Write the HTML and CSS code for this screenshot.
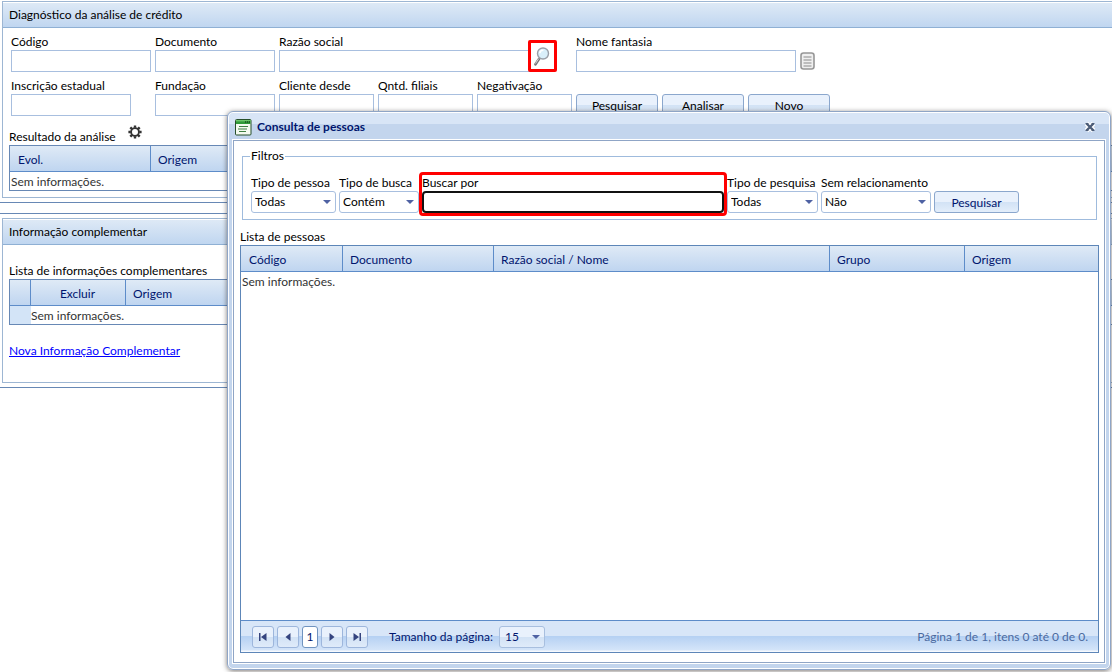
FILE: index.html
```html
<!DOCTYPE html>
<html lang="pt-BR">
<head>
<meta charset="utf-8">
<title>Diagnóstico da análise de crédito</title>
<link rel="stylesheet" href="styles.css">
</head>
<body>
<main class="page">
  <section class="zone">
    <div class="panel">
      <h2 class="panel-title">Diagnóstico da análise de crédito</h2>
      <div class="panel-body">
        <form class="form-grid">
          <div class="field"><label for="codigo">Código</label><input id="codigo" type="text"></div>
          <div class="field"><label for="documento">Documento</label><input id="documento" type="text"></div>
          <div class="field wide">
            <label for="razao">Razão social</label>
            <input id="razao" type="text" class="razao">
            <button type="button" class="lookup" aria-label="Buscar pessoa">
              <svg width="18" height="20" viewBox="0 0 18 20"><path d="M5 13 1.500 18.300" stroke="#77777b" stroke-width="2.600" stroke-linecap="round"/><path d="M4.700 12.600 1.500 17.500" stroke="#d4d4d7" stroke-width="1"/><circle cx="9" cy="7.500" r="5.500" fill="#d9effa" stroke="#9a9fa8" stroke-width="1.400"/><path d="M5.800 7.200a3.400 3.400 0 0 1 3.600-3" stroke="#fff" stroke-width="1.600" fill="none"/></svg>
            </button>
          </div>
          <div class="field wide">
            <label for="fantasia">Nome fantasia</label>
            <div class="with-icon">
              <input id="fantasia" type="text" class="fantasia">
              <button type="button" class="icon-btn" aria-label="Listar">
                <svg width="15" height="18" viewBox="0 0 15 18"><rect x="1" y="1" width="13" height="16" rx="2.5" fill="#efefef" stroke="#979797" stroke-width="1.6"/><path d="M3.5 5h8M3.5 8h8M3.5 11h8M3.5 14h8" stroke="#8c8c8c" stroke-width="1.2"/></svg>
              </button>
            </div>
          </div>
          <div class="field short"><label for="inscricao">Inscrição estadual</label><input id="inscricao" type="text"></div>
          <div class="field"><label for="fundacao">Fundação</label><input id="fundacao" type="text"></div>
          <div class="field"><label for="cliente">Cliente desde</label><input id="cliente" type="text"></div>
          <div class="field"><label for="filiais">Qntd. filiais</label><input id="filiais" type="text"></div>
          <div class="field"><label for="negativacao">Negativação</label><input id="negativacao" type="text"></div>
          <button type="button" class="btn">Pesquisar</button>
          <button type="button" class="btn">Analisar</button>
          <button type="button" class="btn">Novo</button>
        </form>
        <div class="caption result-caption">
          <span>Resultado da análise</span>
          <button type="button" class="icon-btn gear" aria-label="Configurar">
            <svg width="14" height="14" viewBox="0 0 14 14"><circle cx="7" cy="7" r="3.900" fill="none" stroke="#333" stroke-width="1.800"/><path d="M7 .4v2.400M7 11.200v2.400M.4 7h2.400M11.200 7h2.400M2.300 2.300l1.800 1.800M9.900 9.900l1.800 1.800M11.700 2.300 9.900 4.100M4.100 9.900l-1.800 1.800" stroke="#333" stroke-width="2.400"/></svg>
          </button>
        </div>
        <table class="grid bordered">
          <colgroup><col class="w-evol"><col></colgroup>
          <thead><tr><th>Evol.</th><th>Origem</th></tr></thead>
          <tbody><tr><td colspan="2">Sem informações.</td></tr></tbody>
        </table>
      </div>
    </div>
  </section>

  <section class="zone extra">
    <div class="panel">
      <h2 class="panel-title">Informação complementar</h2>
      <div class="panel-body">
        <div class="caption list-caption">Lista de informações complementares</div>
        <table class="grid bordered">
          <colgroup><col class="w-marker"><col class="w-excluir"><col></colgroup>
          <thead><tr><th></th><th class="center">Excluir</th><th>Origem</th></tr></thead>
          <tbody><tr><td class="marker"></td><td colspan="2" class="flush">Sem informações.</td></tr></tbody>
        </table>
        <p class="link-row"><a href="#nova">Nova Informação Complementar</a></p>
      </div>
    </div>
  </section>
</main>

<div class="dialog" role="dialog" aria-labelledby="dialog-title">
  <header class="dialog-head">
    <svg width="17" height="17" viewBox="0 0 17 17"><rect x=".5" y=".5" width="15.500" height="15.500" rx="1" fill="#f4faf0" stroke="#274f2a"/><path d="M1 1h14.500v4H1z" fill="#2f9a38"/><path d="M1 1h14.500v1.400H1z" fill="#6cc66a"/><path d="M10 3h1.200M12 3h1.200M14 3h1" stroke="#164d1c" stroke-width="1.400"/><path d="M4 7.500h9M3 10h9M4 12.500h7" stroke="#3f7f43" stroke-width="1.200"/></svg>
    <h1 id="dialog-title">Consulta de pessoas</h1>
    <button type="button" class="close" aria-label="Fechar">
      <svg width="12" height="12" viewBox="0 0 12 12"><path d="M2.500 2.500l7 7M9.500 2.500l-7 7" stroke="#fff" stroke-width="5"/><path d="M2.500 2.500l7 7M9.500 2.500l-7 7" stroke="#4c5c77" stroke-width="2.400"/><path d="M1.500 2.500h3M7.500 2.500h3M1.500 9.500h3M7.500 9.500h3" stroke="#4c5c77" stroke-width="1"/></svg>
    </button>
  </header>
  <div class="dialog-body">
    <fieldset class="filters">
      <legend>Filtros</legend>
      <div class="filter-row">
        <div class="field f-pessoa"><label for="tp">Tipo de pessoa</label><div class="select"><select id="tp"><option>Todas</option></select></div></div>
        <div class="field f-busca"><label for="tb">Tipo de busca</label><div class="select"><select id="tb"><option>Contém</option></select></div></div>
        <div class="field f-buscar"><label for="bp">Buscar por</label><input id="bp" type="text"></div>
        <div class="field f-pesquisa"><label for="tq">Tipo de pesquisa</label><div class="select"><select id="tq"><option>Todas</option></select></div></div>
        <div class="field f-rel"><label for="sr">Sem relacionamento</label><div class="select"><select id="sr"><option>Não</option></select></div></div>
        <button type="button" class="btn navy">Pesquisar</button>
      </div>
    </fieldset>
    <div class="caption people-caption">Lista de pessoas</div>
    <div class="people">
      <table class="grid">
        <colgroup><col class="w-codigo"><col class="w-documento"><col><col class="w-grupo"><col class="w-origem"></colgroup>
        <thead><tr><th>Código</th><th>Documento</th><th>Razão social / Nome</th><th>Grupo</th><th>Origem</th></tr></thead>
        <tbody><tr><td colspan="5">Sem informações.</td></tr></tbody>
      </table>
      <nav class="pager" aria-label="Paginação">
        <button type="button" aria-label="Primeira página"><svg width="8" height="8" viewBox="0 0 8 8"><path d="M0 0h1.500v8H0zM7.500 0v8L2 4z"/></svg></button>
        <button type="button" aria-label="Página anterior"><svg width="8" height="8" viewBox="0 0 8 8"><path d="M6.500 0v8L1.500 4z"/></svg></button>
        <button type="button" class="current">1</button>
        <button type="button" aria-label="Próxima página"><svg width="8" height="8" viewBox="0 0 8 8"><path d="M1.500 0v8l5-4z"/></svg></button>
        <button type="button" aria-label="Última página"><svg width="8" height="8" viewBox="0 0 8 8"><path d="M.5 0v8L6 4zM6.500 0H8v8H6.500z"/></svg></button>
        <label for="size">Tamanho da página:</label>
        <div class="select size"><select id="size"><option>15</option></select></div>
        <span class="info">Página 1 de 1, itens 0 até 0 de 0.</span>
      </nav>
    </div>
  </div>
</div>
</body>
</html>
```
FILE: styles.css
```css
* { box-sizing: border-box; }

body {
  margin: 0;
  min-height: 100vh;
  overflow: hidden;
  background: #fff;
  color: #000;
  font: 12px/16px Lato, "Open Sans", sans-serif;
}

input, select, button { font: inherit; color: inherit; margin: 0; }

.zone {
  padding: 1px 0 4px 2px;
  border-bottom: 1px solid #6788b5;
}
.extra {
  margin-top: 10px;
  padding-top: 4px;
  border-top: 1px solid #6788b5;
}
.panel { border: 1px solid #9db6d3; border-right: 0; }
.panel-title {
  margin: 0;
  padding: 5px 6px;
  height: 26px;
  font-size: 12px;
  font-weight: 400;
  border-bottom: 1px solid #8fb0d4;
  background: linear-gradient(#dfeaf6, #c0d6f0);
  box-shadow: inset 0 1px #fff;
}
.panel-body { padding: 6px 0 6px 6px; }

.form-grid {
  display: grid;
  grid-template-columns: 140px 120px repeat(3, 95px) repeat(3, 82px);
  gap: 6px 4px;
  padding-left: 2px;
  align-items: end;
}
.field { position: relative; display: flex; flex-direction: column; white-space: nowrap; }
.field input {
  width: 100%;
  height: 22px;
  padding: 0 4px;
  border: 1px solid #a8bfdf;
  background: #fff;
}
.wide { grid-column: span 3; }
.field .razao { width: 272px; }
.lookup {
  position: absolute;
  left: 249px;
  bottom: 0;
  width: 29px;
  height: 32px;
  padding: 3px 0 0 0;
  border: 3px solid #f00;
  border-radius: 2px;
  background: #fff;
}
.with-icon { display: flex; align-items: center; gap: 4px; }
.field .fantasia { width: 220px; }
.icon-btn { display: flex; padding: 0; border: 0; background: none; }
.short input { width: 120px; }

.btn {
  height: 22px;
  padding: 1px 0 0;
  border: 1px solid #8ba7cd;
  border-radius: 3px;
  background: linear-gradient(#e9f1fc 0 50%, #d2e2f5 50%, #e3eefb);
}
.navy { color: #00156e; width: 85px; }

.caption { display: flex; gap: 12px; }
.result-caption { height: 29px; padding-top: 12px; align-items: center; }
.gear { margin-bottom: 10px; }

.grid { width: 100%; border-collapse: separate; border-spacing: 0; table-layout: fixed; }
.bordered { border: 1px solid #6788b5; border-right: 0; }
.grid th {
  height: 26px;
  padding: 2px 8px 0;
  text-align: left;
  font-weight: 400;
  color: #00156e;
  border-bottom: 1px solid #5d8cc9;
  border-right: 1px solid #5d8cc9;
  background: linear-gradient(#dfeaf6, #bfd5f0);
}
.grid th + th { padding-left: 7px; }
.grid th:last-child { border-right: 0; }
.grid th.center { text-align: center; }
.grid td { height: 18px; padding: 1px 1px 0; color: #333; }
.grid .flush { padding-left: 0; }
.grid .marker { background: #d3e4f7; }
.w-evol { width: 141px; }
.w-marker { width: 21px; }
.w-excluir { width: 95px; }
.w-codigo { width: 102px; }
.w-documento { width: 151px; }
.w-grupo { width: 135px; }
.w-origem { width: 133px; }

.list-caption { padding: 12px 0 0; }
.link-row { margin: 0; padding: 18px 0 17px; }
.link-row a { color: #00f; }

.dialog {
  position: absolute;
  inset: 111px 1px 2px 227px;
  display: flex;
  flex-direction: column;
  padding: 0 5px 6px;
  border: 1px solid #8fa5c6;
  border-radius: 6px;
  background: linear-gradient(#d8e5f6 0 12px, #c3d5ed 12px);
  box-shadow: inset 0 0 0 1px #fff, 0 1px 5px rgba(50, 45, 40, .65);
}
.dialog-head { display: flex; align-items: center; height: 28px; padding: 2px 9px 0 2px; gap: 5px; }
.dialog-head h1 { flex: 1; margin: 0; font-size: 12px; color: #00156e; }
.close { display: flex; padding: 0; border: 0; background: none; }
.dialog-body {
  flex: 1;
  display: flex;
  flex-direction: column;
  padding: 7px 5px 9px 6px;
  border: 1px solid #8fa5c6;
  background: #fff;
  box-shadow: 0 0 0 1px #fff;
}

.filters {
  margin: 0 2px;
  padding: 11px 8px 6px;
  border: 1px solid #9fbbdd;
}
.filters legend { padding: 0 1px; margin-left: -1px; }
.filter-row { display: flex; align-items: flex-end; gap: 3px; }
.f-pessoa { width: 85px; }
.f-busca { width: 80px; }
.f-buscar { width: 302px; outline: 3px solid #f00; border-radius: 1px; }
.f-buscar input { border: 2px solid #111; border-radius: 4px; }
.f-pesquisa { width: 91px; }
.f-rel { width: 110px; }

.select { position: relative; }
.select select {
  display: block;
  width: 100%;
  height: 22px;
  padding: 0 3px;
  border: 1px solid #a8bfdf;
  border-radius: 3px;
  background: #fff;
  appearance: none;
}
.select::after {
  content: "";
  position: absolute;
  right: 5px;
  top: 9px;
  border: 4px solid transparent;
  border-top-color: #4f62a3;
  border-bottom: 0;
  pointer-events: none;
}

.people-caption { padding: 9px 0 0; }
.people {
  flex: 1;
  display: flex;
  flex-direction: column;
  border: 1px solid #5d86b8;
}
.pager {
  margin-top: auto;
  display: flex;
  align-items: center;
  gap: 3px;
  height: 32px;
  padding: 0 10px 0 11px;
  border-top: 1px solid #5d8cc9;
  color: #00156e;
  background: linear-gradient(#d8e6f8 0 50%, #b6d1f3 50%, #d3e4f9 92%, #fff);
}
.pager button {
  display: flex;
  align-items: center;
  justify-content: center;
  width: 22px;
  height: 22px;
  padding: 0;
  border: 1px solid #9db6dc;
  border-radius: 3px;
  background: linear-gradient(#e9f1fc 0 50%, #d2e2f5 50%, #dfebfa);
  fill: #35447f;
}
.pager .current { width: 16px; background: #fff; border-color: #6f93c0; }
.pager label { margin: 0 3px 0 18px; }
.size { width: 46px; }
.size select { padding-left: 5px; background: linear-gradient(#e9f1fc 0 50%, #d2e2f5 50%, #dfebfa); }
.info { margin-left: auto; color: #4b6a9f; }
```
